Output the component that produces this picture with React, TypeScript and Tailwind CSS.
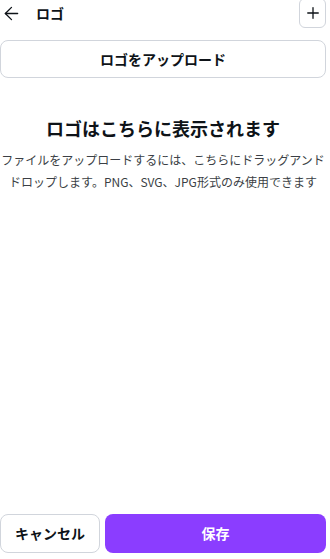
import { ArrowLeft, Plus } from 'lucide-react'

export default function App() {
  return (
    <div
      className="relative h-[559px] w-[330px] overflow-hidden bg-white text-[#0e1318]"
      style={{ fontFamily: '"Noto Sans CJK JP", "Noto Sans", sans-serif' }}
    >
      <div className="flex h-full w-[326px] flex-col">
        {/* header */}
        <div className="-mt-[2px] flex h-[30px] items-center">
          <button className="flex h-[28px] w-[28px] items-center justify-start pl-[1px]">
            <ArrowLeft size={21} strokeWidth={1.5} />
          </button>
          <span className="ml-[8px] text-[14px] font-bold">ロゴ</span>
          <button className="ml-auto flex h-[30px] w-[27px] items-center justify-center rounded-md border border-gray-300">
            <Plus size={18} strokeWidth={1.75} />
          </button>
        </div>

        <button className="mt-[12px] flex h-[38px] w-full items-center justify-center rounded-lg border border-gray-300 text-[14px] font-bold">
          ロゴをアップロード
        </button>

        <div className="mt-[37px] flex flex-col items-center text-center">
          <h2 className="text-[18px] font-bold leading-[26px]">ロゴはこちらに表示されます</h2>
          <p className="mt-[8px] text-[12px] leading-[22px] text-[#3b3f45]">
            ファイルをアップロードするには、こちらにドラッグアンドドロップします。PNG、SVG、JPG形式のみ使用できます
          </p>
        </div>

        <div className="mt-auto mb-[6px] flex gap-[5px]">
          <button className="h-[39px] w-[100px] rounded-lg border border-gray-300 text-[14px] font-bold">
            キャンセル
          </button>
          <button className="h-[39px] flex-1 rounded-lg bg-[#8b3dff] text-[14px] font-bold text-white">
            保存
          </button>
        </div>
      </div>
    </div>
  )
}
